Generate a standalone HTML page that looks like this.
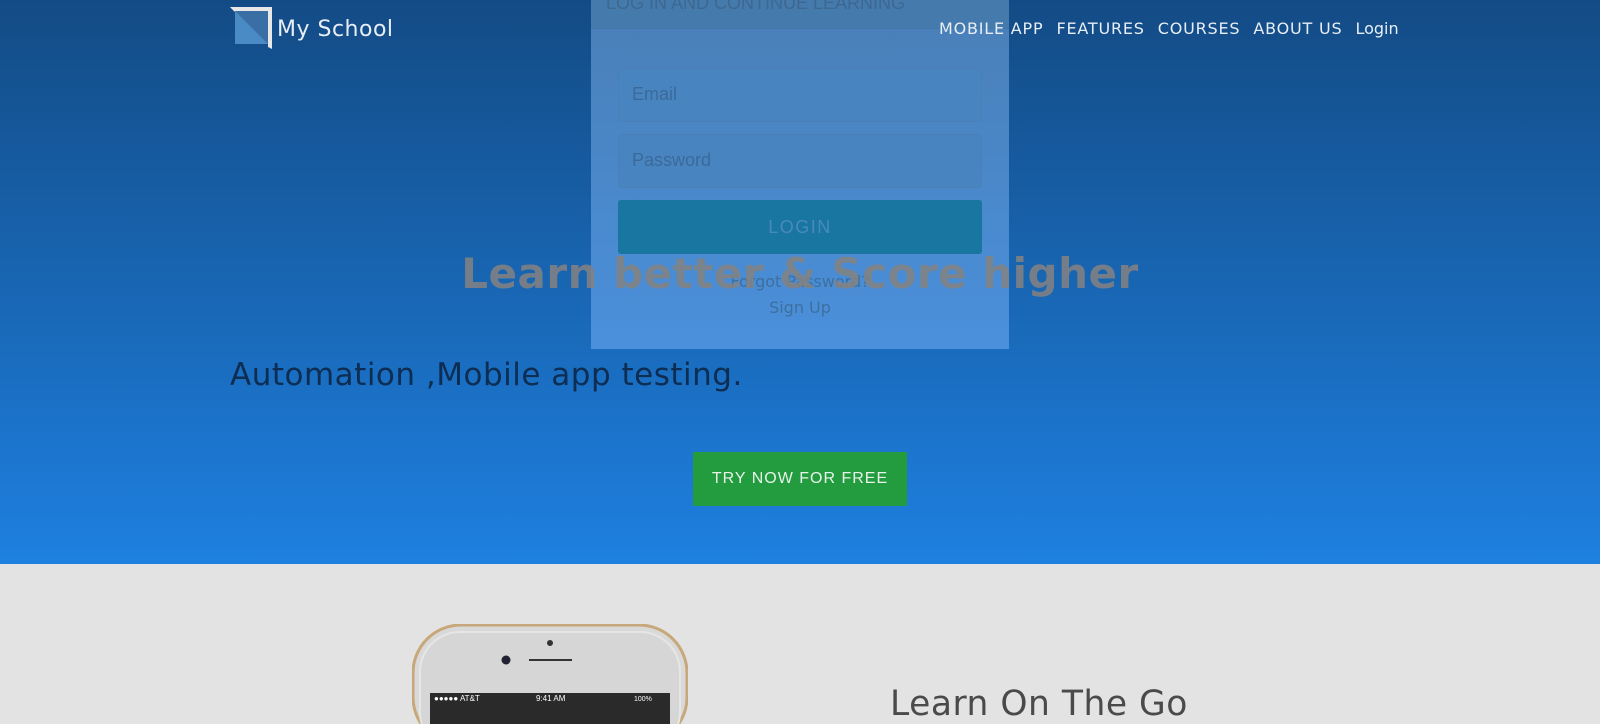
<!DOCTYPE html>
<html><head><meta charset="utf-8"><style>
*{margin:0;padding:0;box-sizing:border-box}
body{width:1600px;height:711px;overflow:hidden;font-family:"DejaVu Sans","Liberation Sans",sans-serif;background:#e3e3e3;position:relative}
.hero{position:absolute;left:0;top:0;width:1600px;height:564px;background:linear-gradient(#134b85,#1e80e0)}
.logo{position:absolute;left:230px;top:7px}
.brand{position:absolute;left:277px;top:17px;color:#e8eef5;font-size:22px;letter-spacing:0.5px}
.nav{position:absolute;top:19px;left:939px;color:#e8eef5;font-size:16px;letter-spacing:0.8px;white-space:nowrap;z-index:5}
.nav span{margin-right:13px}
.modal{position:absolute;left:591px;top:0;width:418px;height:349px;background:linear-gradient(#4a7fb6,#4a90dc);z-index:2}
.mhead{height:29px;background:#457aad;border-bottom:1px solid #4377aa;color:#3e6890;font-family:"Liberation Sans",sans-serif;font-size:18px;padding-left:15px;line-height:0;overflow:hidden}
.mhead div{margin-top:-2px;line-height:10px}
.inp{position:absolute;left:27px;width:364px;height:54px;border:1px solid #4b7fb7;border-radius:3px;background:#4885c0;color:#3b6a9a;font-family:"Liberation Sans",sans-serif;font-size:18px;padding:15px 13px}
.btn{position:absolute;left:27px;top:200px;width:364px;height:54px;border-radius:3px;background:#1876a0;color:#4a89bd;font-family:"Liberation Sans",sans-serif;font-size:18px;letter-spacing:1.5px;text-align:center;line-height:54px}
.mlink{position:absolute;left:0;width:418px;text-align:center;color:#3d6f9f;font-size:16px}
.h1{position:absolute;left:0;width:1600px;top:249px;text-align:center;font-size:42px;font-weight:bold;color:rgba(130,130,130,0.88);z-index:3;letter-spacing:0.5px}
.sub{position:absolute;left:230px;top:357px;font-size:31px;color:#0e2d52;letter-spacing:0.5px}
.try{position:absolute;left:693px;top:452px;width:214px;height:54px;background:#229c3f;color:#e8f3ea;font-family:"Liberation Sans",sans-serif;font-size:16px;letter-spacing:1px;text-align:center;line-height:54px}
.go{position:absolute;left:890px;top:684px;font-size:34.5px;color:#4a4a4a;letter-spacing:0.5px}
</style></head><body>
<div class="hero"></div>
<svg class="logo" width="44" height="42" viewBox="0 0 44 42"><polygon points="0,0 42,0 42,42 38,40 38,4 4,4" fill="#e8e8e8"/><rect x="5" y="4" width="33" height="33" fill="#4a8bc6"/><polygon points="5,4 38,37 38,4" fill="#3a6fa6"/><polygon points="0,0 5,0 5,5" fill="#e8e8e8"/></svg>
<div class="brand">My School</div>
<div class="nav"><span>MOBILE APP</span><span>FEATURES</span><span>COURSES</span><span>ABOUT US</span><span style="letter-spacing:0">Login</span></div>
<div class="modal">
<div class="mhead"><div>LOG IN AND CONTINUE LEARNING</div></div>
<div class="inp" style="top:68px">Email</div>
<div class="inp" style="top:134px">Password</div>
<div class="btn">LOGIN</div>
<div class="mlink" style="top:272px">Forgot Password?</div>
<div class="mlink" style="top:298px">Sign Up</div>
</div>
<div class="h1">Learn better &amp; Score higher</div>
<div class="sub">Automation ,Mobile app testing.</div>
<div class="try">TRY NOW FOR FREE</div>
<svg style="position:absolute;left:412px;top:624px" width="276" height="100"><rect x="1" y="1" width="274" height="120" rx="48" fill="#d9d9d9" stroke="#c8a77a" stroke-width="3"/><rect x="8" y="8" width="260" height="120" rx="40" fill="#d6d6d6" stroke="#e6e6e6" stroke-width="2"/><circle cx="138" cy="19" r="3" fill="#333"/><circle cx="94" cy="36" r="4.5" fill="#223"/><rect x="117" y="35" width="43" height="2" fill="#333"/><rect x="18" y="69" width="240" height="40" fill="#2a2a2a"/><text x="22" y="77" font-family="Liberation Sans" font-size="8" fill="#fff">●●●●● AT&amp;T</text><text x="124" y="77" font-family="Liberation Sans" font-size="8" fill="#fff">9:41 AM</text><text x="222" y="77" font-family="Liberation Sans" font-size="7" fill="#fff">100%</text></svg>
<div class="go">Learn On The Go</div>
</body></html>
